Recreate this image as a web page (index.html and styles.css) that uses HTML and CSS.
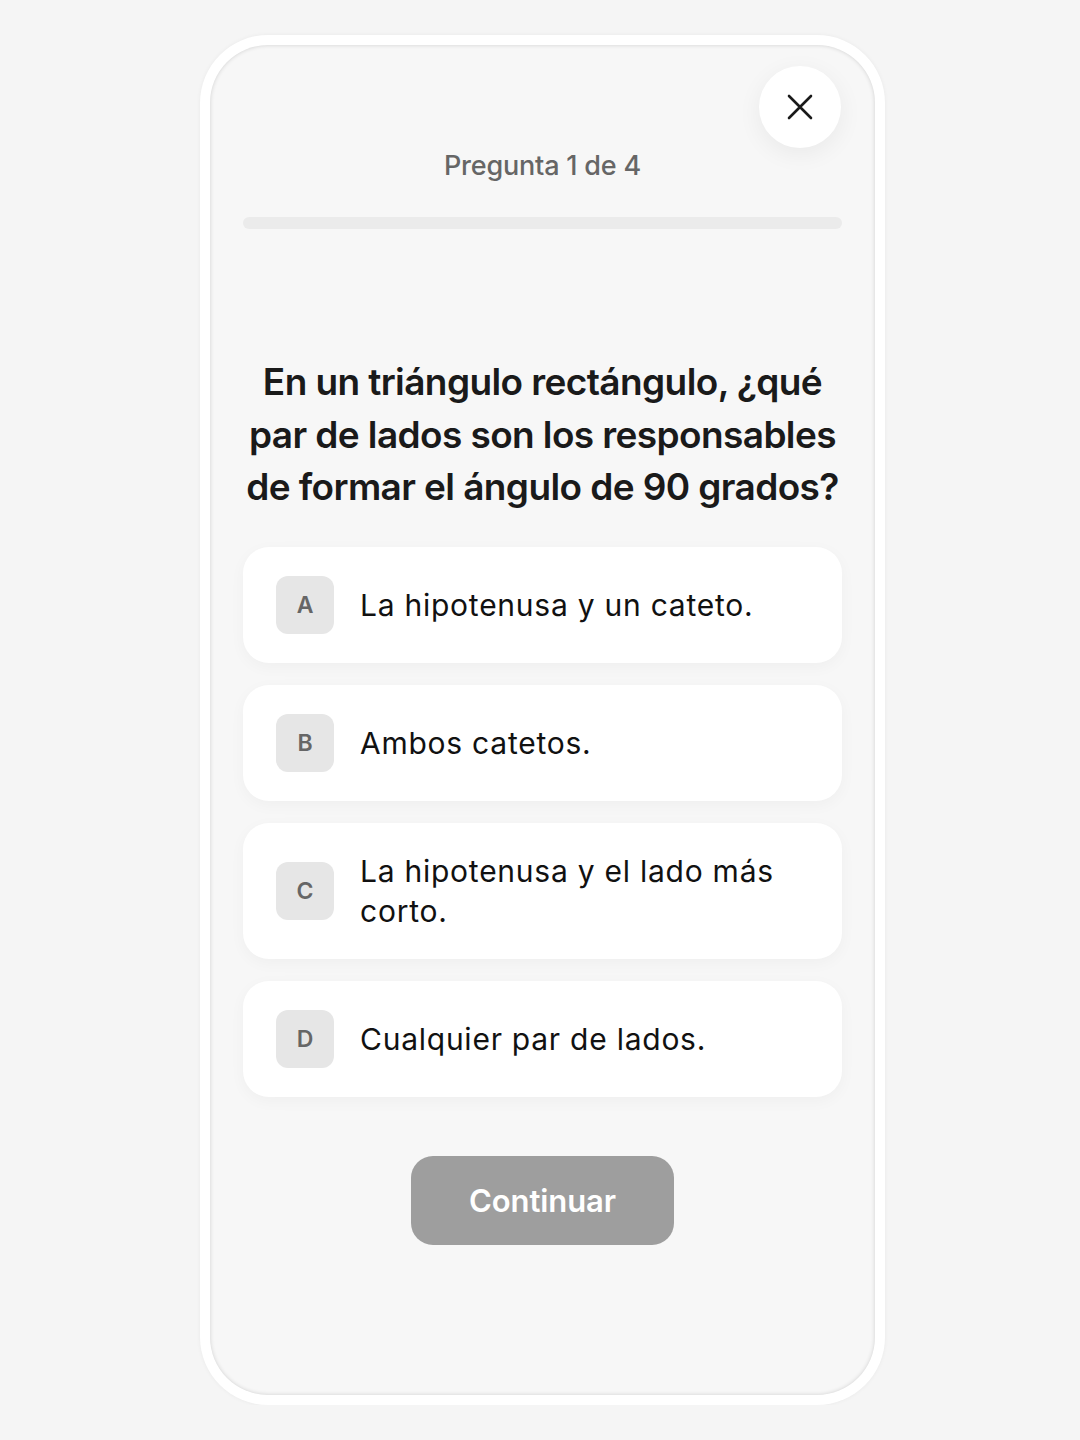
FILE: index.html
```html
<!DOCTYPE html>
<html lang="es">
<head>
<meta charset="utf-8">
<title>Pregunta 1 de 4</title>
<link rel="stylesheet" href="styles.css">
</head>
<body>
<div class="frame">
  <div class="panel">
    <button class="close" aria-label="Cerrar">
      <svg width="28" height="28" viewBox="0 0 28 28" fill="none" stroke="#1a1a1a" stroke-width="2.6" stroke-linecap="round"><path d="M3 3L25 25M25 3L3 25"/></svg>
    </button>
    <div class="counter">Pregunta 1 de 4</div>
    <div class="progress"></div>
    <h1 class="question">En un triángulo rectángulo, ¿qué par de lados son los responsables de formar el ángulo de 90 grados?</h1>
    <div class="options">
      <div class="option"><span class="letter">A</span><span class="text">La hipotenusa y un cateto.</span></div>
      <div class="option"><span class="letter">B</span><span class="text">Ambos catetos.</span></div>
      <div class="option"><span class="letter">C</span><span class="text">La hipotenusa y el lado más corto.</span></div>
      <div class="option"><span class="letter">D</span><span class="text">Cualquier par de lados.</span></div>
    </div>
    <button class="continue">Continuar</button>
  </div>
</div>
</body>
</html>
```
FILE: styles.css
```css
html, body {
  margin: 0;
  padding: 0;
  background: #f5f5f5;
  font-family: Inter, "Noto Sans", sans-serif;
}
.frame {
  width: 665px;
  height: 1350px;
  margin: 35px 0 0 200px;
  padding: 10px;
  background: #ffffff;
  border-radius: 68px;
  box-shadow: 0 0 4px rgba(0,0,0,0.05);
}
.panel {
  position: relative;
  box-sizing: border-box;
  height: 100%;
  background: #f7f7f7;
  border-radius: 58px;
  box-shadow: inset 0 0 4px rgba(0,0,0,0.16);
  padding: 105px 33px 0 33px;
  display: flex;
  flex-direction: column;
  align-items: center;
}
.close {
  position: absolute;
  top: 21px;
  right: 34px;
  width: 82px;
  height: 82px;
  border: none;
  border-radius: 50%;
  background: #ffffff;
  box-shadow: 0 6px 24px rgba(0,0,0,0.06);
  display: flex;
  align-items: center;
  justify-content: center;
  padding: 0;
}
.counter {
  font-size: 27px;
  line-height: 32px;
  font-weight: 500;
  color: #666666;
  letter-spacing: -0.2px;
}
.progress {
  align-self: stretch;
  height: 12px;
  margin-top: 35px;
  border-radius: 6px;
  background: #ebebeb;
}
.question {
  margin: 127px 0 0 0;
  font-size: 37px;
  line-height: 52.5px;
  font-weight: 600;
  color: #1a1a1a;
  text-align: center;
  letter-spacing: -0.6px;
}
.options {
  align-self: stretch;
  margin-top: 33px;
  display: flex;
  flex-direction: column;
  gap: 22px;
}
.option {
  display: flex;
  align-items: center;
  gap: 26px;
  min-height: 116px;
  box-sizing: border-box;
  padding: 28px 33px;
  background: #ffffff;
  border-radius: 26px;
  box-shadow: 0 4px 16px rgba(0,0,0,0.035);
}
.letter {
  flex: none;
  width: 58px;
  height: 58px;
  border-radius: 12px;
  background: #e6e6e6;
  color: #666666;
  font-size: 23px;
  font-weight: 600;
  display: flex;
  align-items: center;
  justify-content: center;
}
.text {
  font-size: 30px;
  line-height: 40px;
  color: #111111;
  letter-spacing: 0.75px;
  padding-right: 8px;
}
.continue {
  margin-top: 59px;
  width: 263px;
  height: 89px;
  border: none;
  border-radius: 22px;
  background: #9e9e9e;
  color: #ffffff;
  font-family: Inter, "Noto Sans", sans-serif;
  font-size: 31px;
  font-weight: 600;
  letter-spacing: -0.1px;
}
```
